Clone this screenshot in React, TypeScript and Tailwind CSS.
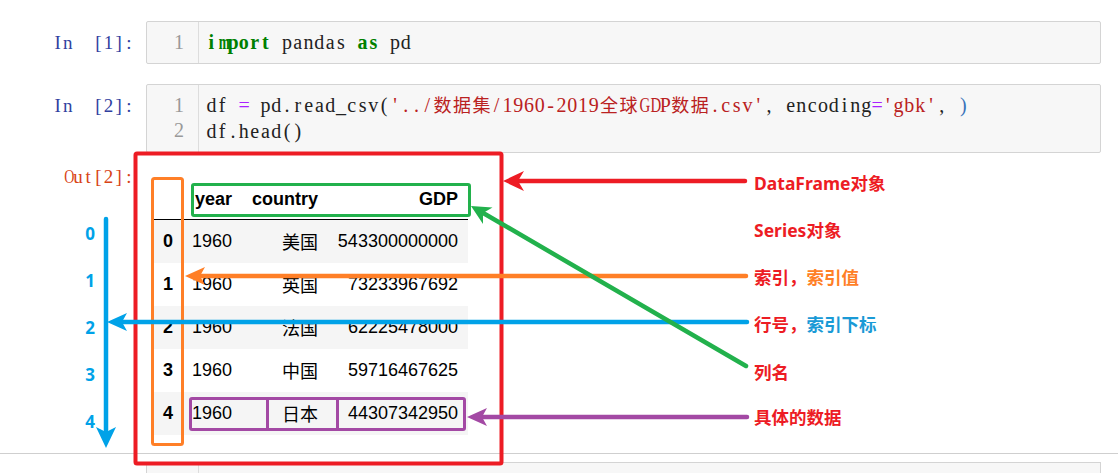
import React from "react";

const serif = "font-['Liberation_Serif','Noto_Sans_CJK_SC',serif]";
const sans = "font-['Liberation_Sans','Noto_Sans_CJK_SC',sans-serif]";
const label = "font-['Noto_Sans','Noto_Sans_CJK_SC',sans-serif] font-bold text-[17.5px] leading-[24px]";

const XWIDE = "mwMW";
const WIDE = "GDOHNUQACKRVXY";

/* SimSun-like monospaced serif: each glyph sits in a fixed-width cell */
function M({ t, narrow }: { t: string; narrow?: boolean }) {
  return (
    <>
      {Array.from(t).map((ch, i) => {
        const cjk = ch.charCodeAt(0) > 0x2e80;
        let cls = cjk
          ? "inline-block w-[19.5px] text-center text-[18px]"
          : narrow
          ? "inline-block w-[10.2px] text-center"
          : "inline-block w-[10.8px] text-center";
        if (XWIDE.includes(ch)) cls += " scale-x-[0.66]";
        else if (WIDE.includes(ch)) cls += " scale-x-[0.74]";
        return (
          <span key={i} className={cls}>
            {ch === " " ? "\u00a0" : ch}
          </span>
        );
      })}
    </>
  );
}

function Prompt({ text, color }: { text: string; color: string }) {
  return (
    <div
      className={`flex w-[146px] shrink-0 justify-end pr-[12px] text-[19px] leading-[25px] whitespace-nowrap ${serif} ${color}`}
    >
      <M t={text} narrow />
    </div>
  );
}

function CodeCell({ prompt, lines }: { prompt: string; lines: React.ReactNode[] }) {
  return (
    <div className="flex">
      <div className="pt-[9px]">
        <Prompt text={prompt} color="text-[#303f9f]" />
      </div>
      <div className="flex w-[955px] rounded-[2px] border border-[#d4d4d4] bg-[#f7f7f7]">
        <div
          className={`w-[52px] shrink-0 border-r border-[#dddddd] py-[8px] pr-[14px] text-right text-[20px] leading-[25px] text-[#999999] ${serif}`}
        >
          {lines.map((_, i) => (
            <div key={i}>{i + 1}</div>
          ))}
        </div>
        <div className={`py-[8px] pl-[7px] text-[20px] leading-[25px] text-[#222222] whitespace-nowrap ${serif}`}>
          {lines.map((l, i) => (
            <div key={i}>{l}</div>
          ))}
        </div>
      </div>
    </div>
  );
}

const rows = [
  { i: "0", y: "1960", c: "美国", g: "543300000000" },
  { i: "1", y: "1960", c: "英国", g: "73233967692" },
  { i: "2", y: "1960", c: "法国", g: "62225478000" },
  { i: "3", y: "1960", c: "中国", g: "59716467625" },
  { i: "4", y: "1960", c: "日本", g: "44307342950" },
];

const RED = "#ed1c24";
const ORANGE = "#ff7f27";
const GREEN = "#22b14c";
const BLUE = "#00a2e8";
const PURPLE = "#a349a4";

export default function App() {
  return (
    <div className="relative h-[473px] w-[1118px] overflow-hidden bg-white">
      <div className="flex flex-col pt-[21px]">
        <CodeCell
          prompt={"In  [1]:"}
          lines={[
            <>
              <span className="font-bold text-[#008000]">
                <M t="import" />
              </span>
              <M t=" pandas " />
              <span className="font-bold text-[#008000]">
                <M t="as" />
              </span>
              <M t=" pd" />
            </>,
          ]}
        />
        <div className="h-[20px]" />
        <CodeCell
          prompt={"In  [2]:"}
          lines={[
            <>
              <M t="df " />
              <span className="text-[#aa22ff]">
                <M t="=" />
              </span>
              <M t=" pd.read_csv(" />
              <span className="text-[#ba2121]">
                <M t="'../数据集/1960-2019全球GDP数据.csv'" />
              </span>
              <M t=", encoding" />
              <span className="text-[#aa22ff]">
                <M t="=" />
              </span>
              <span className="text-[#ba2121]">
                <M t="'gbk'" />
              </span>
              <M t=", " />
              <span className="text-[#3b73b9]">
                <M t=")" />
              </span>
            </>,
            <>
              <M t="df.head()" />
            </>,
          ]}
        />

        {/* output */}
        <div className="flex">
          <div className="pt-[11px]">
            <Prompt text="Out[2]:" color="text-[#d84315]" />
          </div>
          <div className="pt-[24px] pl-[8px]">
            <div className={`w-[314px] text-[18px] text-black ${sans}`}>
              <div className="grid h-[43px] grid-cols-[28px_60px_86px_140px] items-center border-b-[1.5px] border-black pt-[2px] font-bold">
                <div />
                <div className="pr-[10px] text-right">year</div>
                <div className="pr-[10px] text-right">country</div>
                <div className="pr-[10px] text-right">GDP</div>
              </div>
              {rows.map((r, idx) => (
                <div
                  key={r.i}
                  className={`grid h-[43px] grid-cols-[28px_60px_86px_140px] items-center ${
                    idx % 2 === 0 ? "bg-[#f5f5f5]" : "bg-white"
                  }`}
                >
                  <div className="text-center font-bold">{r.i}</div>
                  <div className="pr-[10px] text-right">{r.y}</div>
                  <div className="pr-[10px] pt-[3px] text-right">{r.c}</div>
                  <div className="pr-[10px] text-right">{r.g}</div>
                </div>
              ))}
            </div>
          </div>
        </div>

        <div className="mt-[18px] h-px w-full bg-[#cfcfcf]" />
        <div className="mt-[8px] flex">
          <div className="w-[146px] shrink-0" />
          <div className="flex h-[20px] w-[955px] border border-[#d4d4d4] bg-[#f7f7f7]">
            <div className="w-[52px] border-r border-[#dddddd]" />
          </div>
        </div>
      </div>

      {/* annotation drawing */}
      <svg
        className="pointer-events-none absolute left-0 top-0"
        width="1118"
        height="473"
        viewBox="0 0 1118 473"
      >
        <rect x="135.5" y="153.5" width="366" height="310" fill="none" stroke={RED} strokeWidth="4" rx="1.5" />
        <rect x="152.5" y="178.5" width="30" height="266" fill="none" stroke={ORANGE} strokeWidth="3" rx="2" />
        <rect x="192.5" y="184.5" width="277" height="31" fill="none" stroke={GREEN} strokeWidth="3" rx="1.5" />
        <rect x="190.5" y="398.5" width="274" height="31" fill="none" stroke={PURPLE} strokeWidth="3" rx="1.5" />
        <line x1="267.5" y1="398" x2="267.5" y2="430" stroke={PURPLE} strokeWidth="3" />
        <line x1="337.5" y1="398" x2="337.5" y2="430" stroke={PURPLE} strokeWidth="3" />

        <line x1="745" y1="181" x2="516" y2="181" stroke={RED} strokeWidth="4.5" strokeLinecap="round" />
        <polygon points="503,181 524,171 518,181 524,191" fill={RED} />

        <line x1="746" y1="276" x2="198" y2="276" stroke={ORANGE} strokeWidth="4.5" strokeLinecap="round" />
        <polygon points="185,276 205,267 200,276 205,285" fill={ORANGE} />

        <line x1="747" y1="322" x2="120" y2="322" stroke={BLUE} strokeWidth="4.5" strokeLinecap="round" />
        <polygon points="107,322 127,313 122,322 127,331" fill={BLUE} />

        <line x1="106" y1="219" x2="106" y2="434" stroke={BLUE} strokeWidth="4.5" strokeLinecap="round" />
        <polygon points="106,448 96,427 106,432 116,427" fill={BLUE} />

        <line x1="746" y1="366" x2="484" y2="213.5" stroke={GREEN} strokeWidth="4.5" strokeLinecap="round" />
        <polygon points="471,206 492.5,207.5 483,213 483,224" fill={GREEN} />

        <line x1="747" y1="417" x2="480" y2="417" stroke={PURPLE} strokeWidth="4.5" strokeLinecap="round" />
        <polygon points="467,417 487,408 482,417 487,426" fill={PURPLE} />
      </svg>

      {[
        ["0", 222],
        ["1", 269],
        ["2", 316],
        ["3", 363],
        ["4", 410],
      ].map(([n, t]) => (
        <div
          key={n as string}
          className={`absolute left-[82px] w-[16px] text-center text-[17px] leading-[24px] text-[#00a2e8] ${label}`}
          style={{ top: t as number }}
        >
          {n}
        </div>
      ))}

      <div className={`absolute left-[754px] top-[171px] text-[#ed1c24] ${label}`}>DataFrame对象</div>
      <div className={`absolute left-[754px] top-[218px] text-[#ed1c24] ${label}`}>Series对象</div>
      <div className={`absolute left-[754px] top-[265px] ${label}`}>
        <span className="text-[#ed1c24]">索引，</span>
        <span className="text-[#ff7f27]">索引值</span>
      </div>
      <div className={`absolute left-[754px] top-[312px] ${label}`}>
        <span className="text-[#ed1c24]">行号，</span>
        <span className="text-[#1a9ad6]">索引下标</span>
      </div>
      <div className={`absolute left-[754px] top-[360px] text-[#ed1c24] ${label}`}>列名</div>
      <div className={`absolute left-[754px] top-[405px] text-[#ed1c24] ${label}`}>具体的数据</div>
    </div>
  );
}
